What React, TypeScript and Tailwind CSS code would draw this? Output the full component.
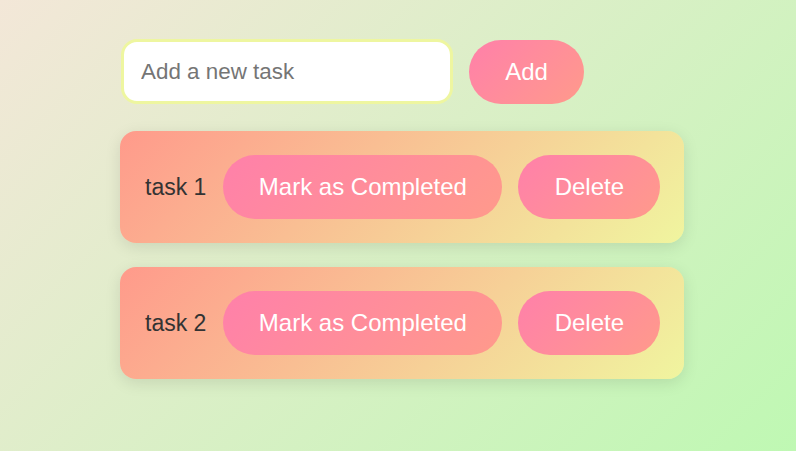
import React from "react";

const btn =
  "rounded-full bg-[linear-gradient(135deg,#ff80aa,#ff9a8b)] text-white text-[24px] leading-[28px] h-[64px] whitespace-nowrap";

function Task({ name }: { name: string }) {
  return (
    <div className="flex w-fit items-center rounded-[16px] bg-[linear-gradient(135deg,#ff9a8b,#f0f59f)] p-[24px] shadow-[0_4px_16px_rgba(0,0,0,0.1)]">
      <span className="mr-[17px] ml-[1px] text-[23px] text-[#333333]">{name}</span>
      <button className={`${btn} mr-[16px] w-[279px]`}>Mark as Completed</button>
      <button className={`${btn} w-[142px]`}>Delete</button>
    </div>
  );
}

export default function App() {
  return (
    <div
      className="min-h-screen w-full bg-[linear-gradient(135deg,#f3e7d8,#bff8b3)] pt-[39px] pl-[120px]"
      style={{ fontFamily: '"Liberation Sans", Arial, sans-serif' }}
    >
      <div className="flex items-center">
        <input
          className="ml-[1px] h-[65px] w-[332px] rounded-[16px] border-[3px] border-[#eef6a0] bg-white px-[17px] text-[22.4px] text-[#333] placeholder:text-[#757575] outline-none"
          placeholder="Add a new task"
        />
        <button className={`${btn} ml-[16px] w-[115px]`}>Add</button>
      </div>
      <div className="mt-[27px] flex flex-col gap-[24px]">
        <Task name="task 1" />
        <Task name="task 2" />
      </div>
    </div>
  );
}
